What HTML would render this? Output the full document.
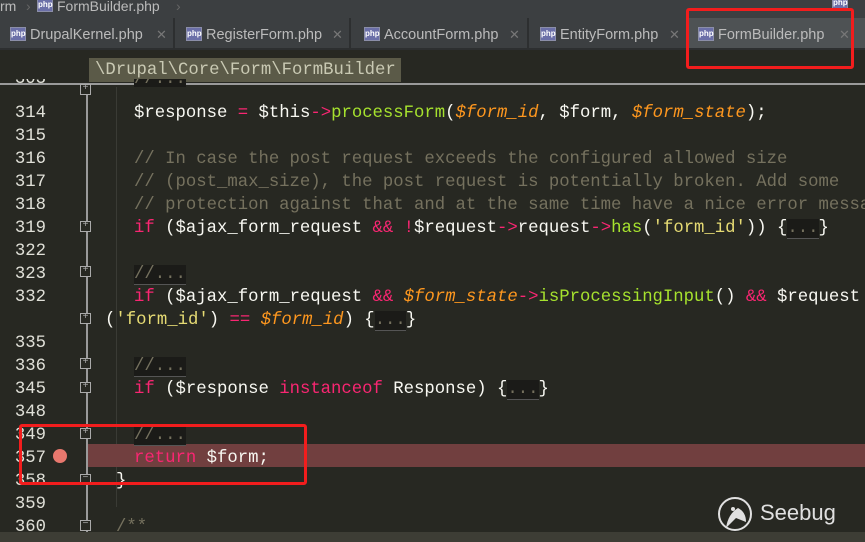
<!DOCTYPE html>
<html><head><meta charset="utf-8"><style>
*{margin:0;padding:0;box-sizing:border-box}
body{width:865px;height:542px;overflow:hidden;background:#272822;position:relative;font-family:"Liberation Sans",sans-serif}
.a{position:absolute}
.top{left:0;top:0;width:865px;height:18px;background:#3c3f41;color:#bbb;font-size:14px;line-height:13px}
.tabs{left:0;top:18px;width:865px;height:32px;background:#3c3f41;border-bottom:2px solid #2d2f30}
.tab{position:absolute;top:0;height:30px;color:#bbbbbb;font-size:14.5px;line-height:34px;border-right:2px solid #2d2f30}
.ic{position:absolute;top:9px;width:16px;height:14px;border:1px solid #8b8ea8;background:#6b6fa8;color:#fff;font-size:8px;line-height:12px;text-align:center;font-weight:bold}
.x{position:absolute;color:#777;font-size:13px}
.hdr{left:0;top:50px;width:865px;height:35px;background:#272822;border-bottom:2px solid #9a9a9a}
.chip{left:89px;top:58px;width:312px;height:24px;background:#5b5a48;color:#c9c9b3;font-family:"Liberation Mono",monospace;font-size:17.3px;line-height:26px;padding-left:6px}
.wrap{left:0;top:3px;width:865px;height:539px;overflow:hidden}
.code{font-family:"Liberation Mono",monospace;font-size:17.3px;white-space:pre;color:#f8f8f2;line-height:23px;height:23px}
.ln{left:0;width:46px;text-align:right;color:#e0e0d8}
.c{color:#75715e}.k{color:#f92672}.v{color:#fd971f;font-style:italic}.f{color:#a6e22e}.s{color:#e6db74}
.fold{background:#1b1b18;color:#75715e;border-bottom:1px solid #555}
.pl{position:absolute;left:80px;width:11px;height:11px;border:1px solid #aaa;background:#272822;font-size:10px;line-height:8px;text-align:center;color:#aaa;font-family:"Liberation Mono",monospace}
.red{border:3px solid #f21d1d;border-radius:3px}
</style></head><body>
<div class="a top"><span class="a" style="left:0;top:0">rm</span><span class="a" style="left:26px;top:0;color:#666">›</span><div class="ic" style="left:37px;top:-2px">php</div><span class="a" style="left:57px;top:0">FormBuilder.php</span><span class="a" style="left:176px;top:0;color:#666">›</span><div class="ic" style="left:832px;top:-4px">php</div></div>
<div class="a tabs">
<div class="tab" style="left:0;width:175px"><div class="ic" style="left:10px">php</div><span class="a" style="left:30px">DrupalKernel.php</span><span class="x" style="left:156px">✕</span></div>
<div class="tab" style="left:175px;width:176px"><div class="ic" style="left:11px">php</div><span class="a" style="left:31px">RegisterForm.php</span><span class="x" style="left:157px">✕</span></div>
<div class="tab" style="left:351px;width:178px"><div class="ic" style="left:13px">php</div><span class="a" style="left:33px">AccountForm.php</span><span class="x" style="left:158px">✕</span></div>
<div class="tab" style="left:529px;width:160px"><div class="ic" style="left:11px">php</div><span class="a" style="left:31px">EntityForm.php</span><span class="x" style="left:140px">✕</span></div>
<div class="tab" style="left:689px;width:176px;background:#4e5254;border:none"><div class="ic" style="left:9px">php</div><span class="a" style="left:29px">FormBuilder.php</span><span class="x" style="left:150px">✕</span></div>
</div>
<div class="a hdr"></div>
<div class="a chip">\Drupal\Core\Form\FormBuilder</div>
<div class="a" style="left:86px;top:87px;width:2px;height:455px;background:#9a9a9a"></div>
<div class="a" style="left:116px;top:87px;width:1px;height:420px;background:#3a3b35"></div>
<div class="a" style="left:88px;top:444px;width:777px;height:23px;background:#713f3f"></div>
<div class="a" style="left:0;top:532px;width:865px;height:10px;background:#3d3d35"></div>

<div class="a wrap">
<div class="a code ln" style="top:76px;height:8px;overflow:hidden;line-height:1px">303</div>
<div class="a code" style="left:134px;top:76px;height:8px;overflow:hidden;line-height:1px"><span class="fold">//...</span></div>

<div class="a code ln" style="top:99px">314</div><div class="a code" style="left:134px;top:99px">$response <span class="k">=</span> $this<span class="k">-&gt;</span><span class="f">processForm</span>(<span class="v">$form_id</span>, $form, <span class="v">$form_state</span>);</div>
<div class="a code ln" style="top:122px">315</div>
<div class="a code ln" style="top:145px">316</div><div class="a code c" style="left:134px;top:145px">// In case the post request exceeds the configured allowed size</div>
<div class="a code ln" style="top:168px">317</div><div class="a code c" style="left:134px;top:168px">// (post_max_size), the post request is potentially broken. Add some</div>
<div class="a code ln" style="top:191px">318</div><div class="a code c" style="left:134px;top:191px">// protection against that and at the same time have a nice error messa</div>
<div class="a code ln" style="top:214px">319</div><div class="a code" style="left:134px;top:214px"><span class="k">if</span> ($ajax_form_request <span class="k">&amp;&amp; !</span>$request<span class="k">-&gt;</span>request<span class="k">-&gt;</span><span class="f">has</span>(<span class="s">'form_id'</span>)) {<span class="fold">...</span>}</div>
<div class="a code ln" style="top:237px">322</div>
<div class="a code ln" style="top:260px">323</div><div class="a code" style="left:134px;top:260px"><span class="fold">//...</span></div>
<div class="a code ln" style="top:283px">332</div><div class="a code" style="left:134px;top:283px"><span class="k">if</span> ($ajax_form_request <span class="k">&amp;&amp;</span> <span class="v">$form_state</span><span class="k">-&gt;</span><span class="f">isProcessingInput</span>() <span class="k">&amp;&amp;</span> $request</div>
<div class="a code" style="left:105px;top:306px">(<span class="s">'form_id'</span>) <span class="k">==</span> <span class="v">$form_id</span>) {<span class="fold">...</span>}</div>
<div class="a code ln" style="top:329px">335</div>
<div class="a code ln" style="top:352px">336</div><div class="a code" style="left:134px;top:352px"><span class="fold">//...</span></div>
<div class="a code ln" style="top:375px">345</div><div class="a code" style="left:134px;top:375px"><span class="k">if</span> ($response <span class="k">instanceof</span> Response) {<span class="fold">...</span>}</div>
<div class="a code ln" style="top:398px">348</div>
<div class="a code ln" style="top:421px">349</div><div class="a code" style="left:134px;top:421px"><span class="fold">//...</span></div>
<div class="a code ln" style="top:444px">357</div><div class="a code" style="left:134px;top:444px"><span class="k">return</span> $form;</div>
<div class="a code ln" style="top:467px">358</div><div class="a code" style="left:116px;top:467px">}</div>
<div class="a code ln" style="top:490px">359</div>
<div class="a code ln" style="top:513px">360</div><div class="a code c" style="left:116px;top:513px">/**</div>
</div>

<div class="pl" style="top:84px">+</div>
<div class="pl" style="top:221px">+</div>
<div class="pl" style="top:266px">+</div>
<div class="pl" style="top:313px">+</div>
<div class="pl" style="top:358px">+</div>
<div class="pl" style="top:382px">+</div>
<div class="pl" style="top:428px">+</div>
<div class="pl" style="top:474px">−</div>
<div class="pl" style="top:520px">−</div>
<div class="a" style="left:53px;top:449px;width:14px;height:14px;border-radius:50%;background:#e8786e"></div>

<div class="a red" style="left:686px;top:8px;width:168px;height:61px"></div>
<div class="a red" style="left:19px;top:424px;width:288px;height:61px"></div>

<svg class="a" style="left:716px;top:494px" width="40" height="40" viewBox="0 0 40 40"><circle cx="19" cy="20" r="16" fill="none" stroke="#e0e0e0" stroke-width="2"/><path d="M10 34 Q12 20 22 14 Q30 18 30 28 L20 24 Z" fill="#e0e0e0"/><circle cx="17" cy="15" r="2" fill="#e0e0e0"/></svg>
<div class="a" style="left:760px;top:500px;color:#e0e0e0;font-size:22px">Seebug</div>
</body></html>
